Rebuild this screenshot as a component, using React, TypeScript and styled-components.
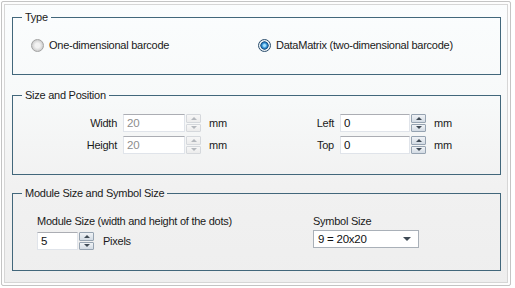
import React, { FC } from "react";
import styled, { createGlobalStyle } from "styled-components";

const GlobalStyle = createGlobalStyle`
  body {
    margin: 0;
    background: #ffffff;
    font-family: "Liberation Sans", Arial, sans-serif;
    font-size: 11px;
    color: #1a1a1a;
  }
`;

const Window = styled.div`
  box-sizing: border-box;
  width: 510px;
  height: 285px;
  margin: 1px 0 0 1px;
  padding: 8px 9px 0 10px;
  border: 1px solid #c4c4c4;
  border-radius: 2px;
  box-shadow: inset 0 0 0 2px #fdfdfd, inset 0 0 0 3px #d6d6d6;
  background: linear-gradient(180deg, #fbfdfe 0%, #f7f9f9 35%, #f1f1f1 65%, #eeeeee 100%);
  display: flex;
  flex-direction: column;
  letter-spacing: -0.25px;
`;

const Group = styled.fieldset<{ $height: number; $top: number }>`
  box-sizing: border-box;
  height: ${({ $height }) => $height}px;
  margin: ${({ $top }) => $top}px 0 0 0;
  padding: 0;
  min-width: 0;
  border: 1px solid #42677b;
`;

const Legend = styled.legend`
  margin-left: 9px;
  padding: 0 3px;
  line-height: 14px;
  color: #1a1a1a;
`;

const TypeBody = styled.div`
  display: flex;
  padding: 14px 0 0 18px;
`;

const RadioItem = styled.label<{ $width?: number }>`
  display: flex;
  align-items: center;
  gap: 5px;
  width: ${({ $width }) => ($width ? `${$width}px` : "auto")};
  line-height: 14px;
`;

const RadioDot = styled.span<{ $checked?: boolean }>`
  box-sizing: border-box;
  width: 13px;
  height: 13px;
  border-radius: 50%;
  border: 1px solid ${({ $checked }) => ($checked ? "#2c4f6e" : "#a2a2a2")};
  background: ${({ $checked }) =>
    $checked
      ? "radial-gradient(circle, #a8e4ff 0 12%, #2f8fd6 32%, #144a78 50%, #eef4f8 56%, #d6dee4 100%)"
      : "radial-gradient(circle, #f2f2f2 0 30%, #cfcfcf 70%, #ececec 100%)"};
`;

const PositionBody = styled.div`
  display: flex;
  padding: 12px 0 0 0;
`;

const FieldGrid = styled.div<{ $left: number; $width: number; $label: number }>`
  box-sizing: border-box;
  margin-left: ${({ $left }) => $left}px;
  width: ${({ $width }) => $width}px;
  display: grid;
  grid-template-columns: ${({ $label }) => $label}px auto 1fr;
  column-gap: 6px;
  row-gap: 4px;
  align-items: center;
  align-content: start;
`;

const FieldLabel = styled.span`
  justify-self: end;
  line-height: 14px;
`;

const Unit = styled.span`
  margin-left: 2px;
  line-height: 14px;
`;

const Spin = styled.div`
  display: flex;
  height: 18px;
`;

const SpinInput = styled.div<{ $width: number; $disabled?: boolean }>`
  box-sizing: border-box;
  width: ${({ $width }) => $width}px;
  height: 100%;
  padding: 0 3px;
  display: flex;
  align-items: center;
  background: #ffffff;
  border: 1px solid #e0e4ea;
  border-top-color: #abadb3;
  color: ${({ $disabled }) => ($disabled ? "#8d8d8d" : "#111111")};
  font-size: 11.5px;
`;

const SpinButtons = styled.div`
  display: flex;
  flex-direction: column;
  gap: 1px;
  width: 15px;
  margin-left: 1px;
`;

const SpinButton = styled.div<{ $disabled?: boolean }>`
  box-sizing: border-box;
  flex: 1;
  display: flex;
  align-items: center;
  justify-content: center;
  border: 1px solid ${({ $disabled }) => ($disabled ? "#d5d8dc" : "#96a3b1")};
  border-radius: 1px;
  background: ${({ $disabled }) =>
    $disabled
      ? "linear-gradient(180deg, #f7f7f7, #ececec)"
      : "linear-gradient(180deg, #f0f3f6, #d3dbe4)"};
`;

const Arrow = styled.span<{ $dir: "up" | "down"; $disabled?: boolean; $size?: number }>`
  width: 0;
  height: 0;
  border-left: ${({ $size }) => $size ?? 3}px solid transparent;
  border-right: ${({ $size }) => $size ?? 3}px solid transparent;
  ${({ $dir, $disabled, $size }) =>
    $dir === "up"
      ? `border-bottom: ${$size ?? 3}px solid ${$disabled ? "#b4b8bd" : "#3f4a55"};`
      : `border-top: ${$size ?? 3}px solid ${$disabled ? "#b4b8bd" : "#3f4a55"};`}
`;

const ModuleBody = styled.div`
  display: flex;
  padding: 14px 0 0 24px;
`;

const Column = styled.div<{ $width?: number }>`
  width: ${({ $width }) => ($width ? `${$width}px` : "auto")};
  display: flex;
  flex-direction: column;
`;

const ColumnLabel = styled.span`
  line-height: 14px;
`;

const InlineRow = styled.div`
  display: flex;
  align-items: center;
  gap: 9px;
  margin-top: 4px;
`;

const Select = styled.div`
  box-sizing: border-box;
  width: 106px;
  height: 18px;
  margin-top: 2px;
  padding: 0 7px 0 4px;
  display: flex;
  align-items: center;
  justify-content: space-between;
  background: #ffffff;
  border: 1px solid #a9b0b8;
  font-size: 11.5px;
  color: #111111;
`;

type SpinProps = { value: string; width: number; disabled?: boolean };

const SpinBox: FC<SpinProps> = ({ value, width, disabled }) => (
  <Spin>
    <SpinInput $width={width} $disabled={disabled}>
      {value}
    </SpinInput>
    <SpinButtons>
      <SpinButton $disabled={disabled}>
        <Arrow $dir="up" $disabled={disabled} />
      </SpinButton>
      <SpinButton $disabled={disabled}>
        <Arrow $dir="down" $disabled={disabled} />
      </SpinButton>
    </SpinButtons>
  </Spin>
);

const App: FC = () => {
  return (
    <>
      <GlobalStyle />
      <Window>
        <Group $height={65} $top={0}>
          <Legend>Type</Legend>
          <TypeBody>
            <RadioItem $width={227}>
              <RadioDot />
              One-dimensional barcode
            </RadioItem>
            <RadioItem>
              <RadioDot $checked />
              DataMatrix (two-dimensional barcode)
            </RadioItem>
          </TypeBody>
        </Group>

        <Group $height={87} $top={13}>
          <Legend>Size and Position</Legend>
          <PositionBody>
            <FieldGrid $left={64} $width={227} $label={40}>
              <FieldLabel>Width</FieldLabel>
              <SpinBox value="20" width={62} disabled />
              <Unit>mm</Unit>
              <FieldLabel>Height</FieldLabel>
              <SpinBox value="20" width={62} disabled />
              <Unit>mm</Unit>
            </FieldGrid>
            <FieldGrid $left={0} $width={160} $label={30}>
              <FieldLabel>Left</FieldLabel>
              <SpinBox value="0" width={70} />
              <Unit>mm</Unit>
              <FieldLabel>Top</FieldLabel>
              <SpinBox value="0" width={70} />
              <Unit>mm</Unit>
            </FieldGrid>
          </PositionBody>
        </Group>

        <Group $height={85} $top={11}>
          <Legend>Module Size and Symbol Size</Legend>
          <ModuleBody>
            <Column $width={276}>
              <ColumnLabel>Module Size (width and height of the dots)</ColumnLabel>
              <InlineRow>
                <SpinBox value="5" width={41} />
                <span>Pixels</span>
              </InlineRow>
            </Column>
            <Column>
              <ColumnLabel>Symbol Size</ColumnLabel>
              <Select>
                <span>9 = 20x20</span>
                <Arrow $dir="down" $size={4} />
              </Select>
            </Column>
          </ModuleBody>
        </Group>
      </Window>
    </>
  );
};

export default App;
